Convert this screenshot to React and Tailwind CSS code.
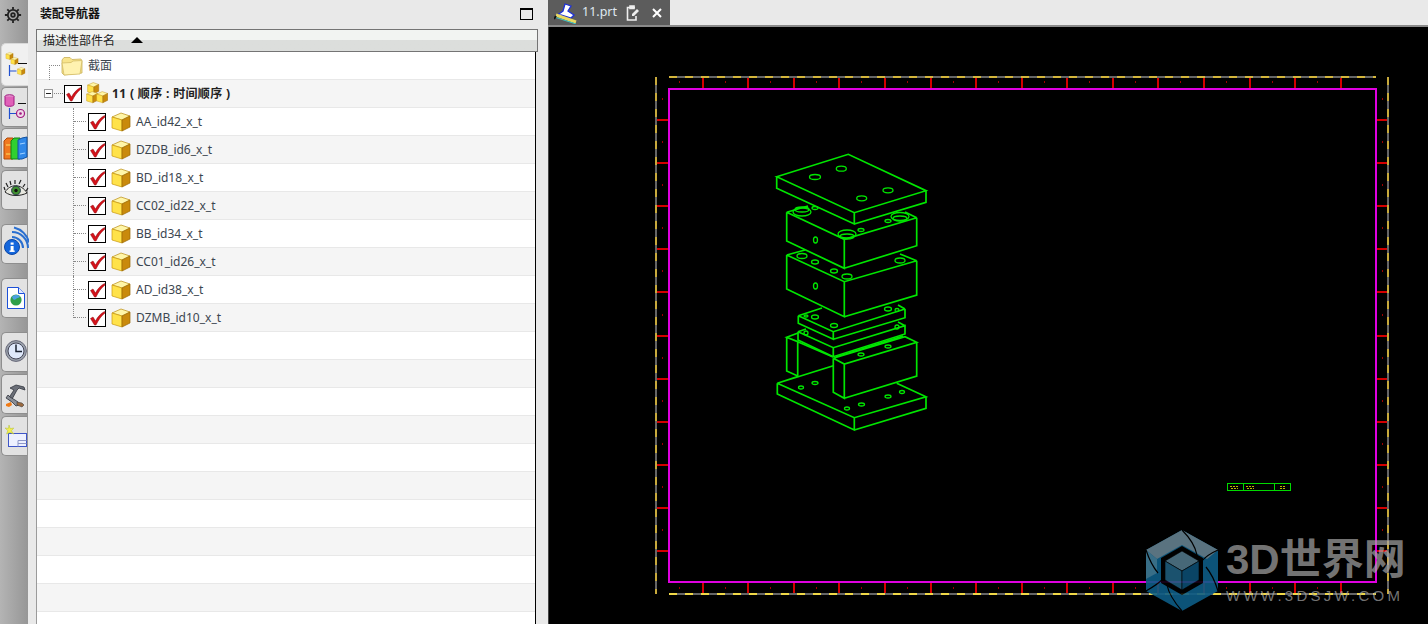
import React from 'react';

const cjk = "font-['Noto_Sans','Noto_Sans_CJK_SC',sans-serif]";

const parts = ['AA_id42_x_t', 'DZDB_id6_x_t', 'BD_id18_x_t', 'CC02_id22_x_t', 'BB_id34_x_t', 'CC01_id26_x_t', 'AD_id38_x_t', 'DZMB_id10_x_t'];
const emptyRows = Array.from({ length: 11 }, (_, i) => i);

function CheckBox() {
  return (
    <svg width="18" height="18" viewBox="0 0 18 18" className="shrink-0">
      <rect x="0.5" y="0.5" width="17" height="17" fill="#fff" stroke="#000" />
      <path d="M2.5 9.5 L5 8 L7.5 12 C9.5 8 12.5 4.5 16.5 2.5 L17 4 C13 7 10.5 11 8 16 L6.5 16 Z" fill="#d4121a" stroke="#8e0a10" strokeWidth="0.5" />
    </svg>
  );
}

function Cube({ x = 0, y = 0, s = 1 }) {
  return (
    <g transform={`translate(${x} ${y}) scale(${s})`}>
      <path d="M1 5 L10 1 L19 4 L11 8 Z" fill="#fff6a8" stroke="#b98a10" strokeWidth="0.7" />
      <path d="M1 5 L11 8 L11 19 L1 16 Z" fill="#ffe24a" stroke="#c8960f" strokeWidth="0.7" />
      <path d="M11 8 L19 4 L19 15 L11 19 Z" fill="#c98a0c" stroke="#9a6806" strokeWidth="0.7" />
    </g>
  );
}

function PartIcon() {
  return (
    <svg width="20" height="20" viewBox="0 0 20 20" className="shrink-0">
      <Cube />
    </svg>
  );
}

function AssemblyIcon() {
  return (
    <svg width="22" height="22" viewBox="0 0 22 22" className="shrink-0">
      <Cube x={1} y={0} s={0.62} />
      <Cube x={0} y={9} s={0.62} />
      <Cube x={10} y={9} s={0.62} />
    </svg>
  );
}

function FolderIcon() {
  return (
    <svg width="22" height="20" viewBox="0 0 22 20" className="shrink-0">
      <path d="M1 4 L3 1.5 L9 1.5 L11 3.5 L20 3 L21 5 L21 17 L3 19 L1 17 Z" fill="#f8e48c" stroke="#c8b05a" strokeWidth="0.8" />
      <path d="M1 7 L10 6.5 L12 5 L21 4.5 L19 18 L3 19 Z" fill="#fff2b0" stroke="#d4bc66" strokeWidth="0.8" />
    </svg>
  );
}

function Tree({ label, bold, className = '' }) {
  return <span className={`${cjk} text-[12px] leading-none whitespace-nowrap ${bold ? 'font-bold text-[#222]' : 'text-[#3c4650]'} ${className}`}>{label}</span>;
}

function Tab({ active, className, children }) {
  return (
    <div className={`relative ml-[1px] h-[40px] rounded-l-[5px] border-y border-l ${active ? 'w-[27px] bg-[#f0f0f0] border-[#d8d8d8]' : 'w-[26px] bg-[#e2e2e2] border-[#8e8e8e]'} ${className}`}>
      <svg width="28" height="44" viewBox="0 0 28 44" className="absolute -left-[1px] -top-[1px]">{children}</svg>
    </div>
  );
}

function LeftRail() {
  return (
    <div className="flex w-[28px] shrink-0 flex-col bg-gradient-to-r from-[#b4b4b4] to-[#969696]">
      <div className="flex h-[29px] items-center pl-[4px]">
        <svg width="18" height="18" viewBox="0 0 16 16" fill="none" stroke="#222" strokeWidth="1.6">
          <circle cx="8" cy="8" r="4.6" />
          <circle cx="8" cy="8" r="1.6" />
          <path d="M8 .8v2.4M8 12.8v2.4M.8 8h2.4M12.8 8h2.4M2.9 2.9l1.7 1.7M11.4 11.4l1.7 1.7M13.1 2.9l-1.7 1.7M4.6 11.4l-1.7 1.7" />
        </svg>
      </div>
      <Tab active className="mt-[14px] !h-[43px]">
        <path d="M17 20.5h9" stroke="#111" />
        <path d="M8.5 22v11M8.5 28h7" stroke="#2050d0" strokeWidth="1.2" fill="none" />
        <Cube x={4.5} y={9} s={0.4} />
        <Cube x={9.5} y={14} s={0.4} />
        <Cube x={16} y={24} s={0.42} />
      </Tab>
      <Tab className="mt-[1px]">
        <ellipse cx="8.5" cy="9.5" rx="4.5" ry="1.8" fill="#e4a0d0" stroke="#a01880" />
        <path d="M4 9.5v8c0 2.4 9 2.4 9 0v-8" fill="#e060b8" stroke="#a01880" />
        <path d="M17 16.5h8" stroke="#111" />
        <path d="M8.5 21v11M8.5 26.5h7" stroke="#2050d0" strokeWidth="1.2" fill="none" />
        <circle cx="19.5" cy="26.5" r="4" fill="#f0d8e8" stroke="#a01880" strokeWidth="1.2" />
        <circle cx="19.5" cy="26.5" r="1.3" fill="#a01880" />
      </Tab>
      <Tab className="mt-[1px]">
        <path d="M3 13l3-3h6v21H3z" fill="#f07820" stroke="#b04808" />
        <path d="M5 17h5M5 26h5" stroke="#ffe060" strokeWidth="1.2" />
        <path d="M10 13l3-3h6v21h-9z" fill="#30d030" stroke="#108010" />
        <path d="M17 12l4-2 5-1v20l-5 2h-4z" fill="#3088e8" stroke="#1050a0" />
        <path d="M19 16l5-1M19 26l5-1" stroke="#a0d0ff" strokeWidth="1.2" />
      </Tab>
      <Tab className="mt-[2px]">
        <path d="M4 22C9 14 20 13 26 23C20 26 10 27 4 22Z" fill="#e8e8e0" stroke="#222" />
        <circle cx="15" cy="20.5" r="4.4" fill="#3f8f2f" stroke="#234" />
        <circle cx="15" cy="20.5" r="1.7" fill="#111" />
        <path d="M4 20l-1-3M7 17l-2-4M10 15l-1-4M14 14v-4M18 14l2-4M22 17l2-3M25 21l2-3" stroke="#222" strokeWidth="1.2" />
      </Tab>
      <Tab className="mt-[14px]">
        <path d="M11 13a11 11 0 0 1 11 11" fill="none" stroke="#2a6fd0" strokeWidth="2" />
        <path d="M11 8a16 16 0 0 1 16 16" fill="none" stroke="#2a6fd0" strokeWidth="2" />
        <path d="M13 3.5a20 20 0 0 1 15 15" fill="none" stroke="#2a6fd0" strokeWidth="2" />
        <circle cx="11" cy="23" r="7.5" fill="#1466dc" stroke="#0c48a8" />
        <rect x="9.6" y="22" width="3" height="5.5" fill="#fff" />
        <rect x="9.6" y="18.5" width="3" height="2.2" fill="#fff" />
        <rect x="8.5" y="26.5" width="5.2" height="1.4" fill="#fff" />
      </Tab>
      <Tab className="mt-[14px]">
        <path d="M6.5 9.5h11l6 6v15h-17z" fill="#fff" stroke="#1c50d8" />
        <path d="M17.5 9.5v6h6" fill="#dfe8ff" stroke="#1c50d8" />
        <circle cx="15" cy="22" r="5.6" fill="#2f9f4a" />
        <path d="M11 19c2-2.5 6-2.5 8-.5-1 2-3 1-4 2.5s-3 1-4-2z" fill="#4aa0e0" />
      </Tab>
      <Tab className="mt-[14px]">
        <circle cx="15" cy="19" r="10.4" fill="#9aa2ac" stroke="#667" />
        <circle cx="15" cy="19" r="8" fill="#dfe9fb" stroke="#445" />
        <path d="M15 12.5V19.5H21" fill="none" stroke="#1a2230" strokeWidth="1.5" />
      </Tab>
      <Tab className="mt-[2px]">
        <path d="M9 14l6-3 8 2 1 3-6-2-2 2-6 11-3-2 6-9z" fill="#6b6f78" stroke="#30343c" strokeWidth="0.8" />
        <path d="M7 21l2 2 5 3 3 2 1 3-3 1-4-4-3-2-3-2z" fill="#8a8e96" stroke="#30343c" strokeWidth="0.8" />
        <path d="M5 30l5-2 1 3-3 2-3-1z" fill="#f07a14" />
        <path d="M16 28l5 1 2 2-2 2-5-2z" fill="#9a6a40" stroke="#444" strokeWidth="0.6" />
      </Tab>
      <Tab className="mt-[2px]">
        <rect x="7.5" y="17.5" width="18" height="13" fill="#eef1ff" stroke="#3f56c8" />
        <path d="M17 24.5h8.5M17 24.5v6M17 27.5h8.5" stroke="#8e98c8" fill="none" />
        <path d="M8 9l1.2 3.6 3.6-.6-2.4 2.8L12.8 18 9 16.4 5.6 18l1.2-3.4L4 12l3.4.4z" fill="#f4ee50" stroke="#b0c030" strokeWidth="0.5" />
      </Tab>
    </div>
  );
}

function Navigator() {
  return (
    <div className="flex w-[520px] shrink-0 flex-col bg-[#e9e9e9]">
      <div className="flex h-[29px] shrink-0 items-center justify-between pb-[1px] pl-[12px] pr-[15px]">
        <span className={`${cjk} text-[12px] font-bold text-[#111]`}>装配导航器</span>
        <div className="h-[12px] w-[13px] border border-t-2 border-black" />
      </div>
      <div className="ml-[8px] flex w-[502px] flex-1 flex-col overflow-hidden">
        <div className="flex h-[23px] shrink-0 items-center border border-[#747474] bg-gradient-to-b from-[#f2f4f2] from-50% to-[#dcdedc] to-50% pl-[6px]">
          <span className={`${cjk} text-[12px] text-[#222]`}>描述性部件名</span>
          <span className="ml-[16px] mb-[2px] h-0 w-0 border-x-[6px] border-b-[6px] border-x-transparent border-b-black" />
        </div>
        <div className="relative mr-[2px] flex-1 border-x border-r-black border-l-[#9a9a9a] bg-white">
          <div className="relative flex h-[28px] items-center gap-[5px] border-b border-[#e8e8e8] pl-[24px]">
            <FolderIcon />
            <Tree label="截面" />
            <div className="absolute left-[12px] top-[13px] h-[27px] w-[11px] border-l border-t border-dotted border-[#888]" />
          </div>
          <div className="relative flex h-[28px] items-center border-b border-[#e8e8e8] bg-[#f5f5f5] pl-[27px]">
            <CheckBox />
            <div className="ml-[4px] mb-[1px]"><AssemblyIcon /></div>
            <div className="ml-[4px]"><Tree label="11 ( 顺序 : 时间顺序 )" bold className="block tracking-[0.35px]" /></div>
            <div className="absolute left-[7px] top-[9px] flex h-[9px] w-[9px] items-center justify-center border border-[#999] bg-white">
              <div className="h-px w-[5px] bg-[#222]" />
            </div>
            <div className="absolute left-[17px] top-[13px] w-[9px] border-t border-dotted border-[#888]" />
          </div>
          {parts.map((name, i) => (
            <div key={name} className={`relative flex h-[28px] items-center border-b border-[#e8e8e8] pl-[51px] ${i % 2 ? 'bg-[#f5f5f5]' : 'bg-white'}`}>
              <CheckBox />
              <div className="ml-[5px]"><PartIcon /></div>
              <div className="ml-[5px]"><Tree label={name} className="block" /></div>
              <div className={`absolute left-[36px] top-0 border-l border-dotted border-[#888] ${i === parts.length - 1 ? 'h-[14px]' : 'h-[28px]'}`} />
              <div className="absolute left-[37px] top-[13px] w-[12px] border-t border-dotted border-[#888]" />
            </div>
          ))}
          {emptyRows.map((r) => (
            <div key={r} className={`h-[28px] border-b border-[#e8e8e8] ${r % 2 ? 'bg-[#f5f5f5]' : 'bg-white'}`} />
          ))}
        </div>
      </div>
    </div>
  );
}

const G = '#00e600';
const faces = [
  // top plate
  'M776.7 176.7 848.3 154.3 926 190.7 854.3 212.7Z M776.7 176.7V188.3L854.3 224V212.7 M854.3 224 926 202.3V190.7',
  // block 1
  'M786.7 212.3 844.3 239.3 916.7 217.7 M786.7 212.3V241L844.3 268.3V239.3 M844.3 268.3 916.7 245.7V217.7 M786.7 212.3 808 206 M905 212 916.7 217.7',
  // block 2
  'M786.7 255 844.3 281.7 916.7 260.7 M786.7 255 805 250 M786.7 255V289L844.3 316.7V281.7 M844.3 316.7 916.7 295V260.7 M900 254 916.7 260.7',
  // thin plates
  'M798.3 315.7 833.3 331.7 905 309 M798.3 315.7V323.3L833.3 339.3V331.7 M833.3 339.3 905 317.7V309 M798.3 315.7 822 308 M898 305 905 309',
  'M798 331.7 833.3 347.7 905 325.7V334L833.3 356.7V347.7 M798 331.7V340L833.3 356.7 M798 331.7 806 329 M898 322 905 325.7',
  // left block
  'M786.7 337.3V371L797.7 376V341.7L786.7 337.3 798 333 M797.7 341.7 833 357',
  // right block
  'M833.3 358.3 844.3 364 916.7 342.3 905 336.7 833.3 358.3 M833.3 358.3V392.3L844.3 398.3V364 M844.3 398.3 916.7 376V342.3 M836 357 903 336',
  // base plate
  'M777.3 383.3 833.3 365.7 M777.3 383.3 854.3 417.7 926 396.7 896.7 383.3 M777.3 383.3V394L854.3 430V417.7 M854.3 430 926 408.3V396.7 M797.7 376.5 777.3 383.3',
];
const holes = [
  [841.3, 168.7, 5, 2.5], [815, 177, 5.5, 2.5], [888, 190.3, 5, 2.5], [861.7, 198.3, 5, 2.5],
  [802, 212, 9, 4], [802, 209.5, 7, 2.5], [815, 208, 3, 1.5], [900, 216.5, 9, 4], [900, 218.5, 7, 2.5], [888, 221, 3, 1.5],
  [847, 234, 9, 4], [847, 236.5, 7, 2.5], [861, 230, 3, 1.5], [815.5, 240, 2, 3],
  [802, 256, 5, 2.5], [815, 262, 3.5, 2], [834, 271, 3.5, 2], [847, 276.5, 5, 2.5], [900, 260.5, 5, 2.5], [815.5, 286, 2, 3],
  [888, 309, 3.5, 2], [815, 317, 3.5, 2], [806, 316, 2, 1], [834, 325.5, 3.5, 2], [897, 310, 2, 1.5], [806, 333, 2, 2], [897, 327, 2, 2],
  [888, 346.5, 3, 1.5], [861, 354.5, 3, 1.5],
  [801, 387.5, 2.5, 1.5], [815, 383, 3, 1.5], [888, 396.5, 3, 1.5], [902, 392, 2.5, 1.5], [847, 408.5, 2.5, 1.5], [861.5, 404.5, 3, 1.5],
];
const topTicks = Array.from({ length: 15 }, (_, i) => 702.7 + i * 45.57);
const sideTicks = Array.from({ length: 11 }, (_, i) => 120 + i * 43.1);

function Drawing() {
  return (
    <svg viewBox="548 27 880 597" width="880" height="597" className="block" shapeRendering="crispEdges">
      {topTicks.map((x) => (
        <g key={x} stroke="#d40000">
          <path d={`M${x} 77V89M${x} 582V594`} strokeWidth="2" />
          <path d={`M${x - 23} 81V83M${x - 23} 587V589`} stroke="#a00000" />
        </g>
      ))}
      {sideTicks.map((y) => (
        <g key={y} stroke="#d40000">
          <path d={`M657 ${y}H669M1376 ${y}H1388`} strokeWidth="2" />
          <path d={`M662 ${y - 22}v2M1382 ${y - 22}v2`} stroke="#a00000" />
        </g>
      ))}
      <path d="M669 77H1376M669 594H1376M656 77V594M1388 77V594" stroke="#666" strokeWidth="2" fill="none" />
      <path d="M669 77H1376" stroke="#d4b63c" strokeWidth="2" strokeDasharray="8 8" fill="none" />
      <path d="M669 594H1376" stroke="#f0d848" strokeWidth="2" strokeDasharray="8 8" fill="none" />
      <path d="M656 77V594M1388 77V594" stroke="#c8aa3c" strokeWidth="2" strokeDasharray="8 8" fill="none" />
      <rect x="668.5" y="89" width="707.5" height="493" fill="none" stroke="#e000e0" strokeWidth="2" />
      {faces.map((d) => (
        <path key={d} d={d} fill="none" stroke={G} strokeWidth="1.7" shapeRendering="auto" />
      ))}
      {holes.map(([cx, cy, rx, ry]) => (
        <ellipse key={`${cx}-${cy}`} cx={cx} cy={cy} rx={rx} ry={ry} fill="none" stroke={G} strokeWidth="1.3" shapeRendering="auto" />
      ))}
      <rect x="1227.5" y="483.5" width="63" height="7" fill="none" stroke="#00d800" strokeWidth="1.5" />
      <path d="M1243.5 484V490M1274.5 484V490" stroke="#00d800" />
      <path d="M1230 486h8M1231 488h7M1246 486h8M1247 488h7M1280 486h6M1280 488h6" stroke="#b8b800" strokeDasharray="2 1" />
    </svg>
  );
}

function Watermark() {
  return (
    <div className="pointer-events-none absolute left-[596px] top-[502px] flex items-start">
      <svg width="74" height="84" viewBox="0 0 74 84" className="opacity-90">
        <path d="M37 1 73 21V62L37 82 1 62V21Z" fill="#0e5d86" />
        <path d="M37 1 73 21 62 30 37 16 12 30 1 21Z" fill="#64808e" />
        <path d="M1 21 12 30V44L1 50Z" fill="#3f7a96" />
        <path d="M37 1C44 8 50 16 52 26M73 21C66 24 60 28 56 33M73 62C70 52 66 44 61 38M37 82C30 74 24 66 22 56M1 62C8 58 14 54 18 50M1 21C4 30 8 38 13 44" fill="none" stroke="#000" strokeWidth="1.2" />
        <path d="M37 17 58 29V54L37 66 16 54V29Z" fill="#000" />
        <path d="M37 22 54 32 37 42 20 32Z" fill="#4f7486" stroke="#000" strokeWidth="0.6" />
        <path d="M20 32 37 42V61L20 51Z" fill="#1f5b7a" stroke="#000" strokeWidth="0.6" />
        <path d="M54 32 37 42V61L54 51Z" fill="#0c4c70" stroke="#000" strokeWidth="0.6" />
      </svg>
      <div className="ml-[7px] flex flex-col">
        <span className="font-['Liberation_Sans','Noto_Sans_CJK_SC',sans-serif] mt-[6px] text-[42px] leading-[50px] font-bold whitespace-nowrap text-[#a8a8a8]/70">3D世界网</span>
        <span className="font-['Liberation_Sans',sans-serif] mt-[3px] text-[15px] leading-[15px] tracking-[3.25px] whitespace-nowrap text-[#a8a8a8]/70">WWW.3DSJW.COM</span>
      </div>
    </div>
  );
}

function Viewport() {
  return (
    <div className="flex min-w-0 flex-1 flex-col bg-[#e9e9e9]">
      <div className="flex h-[27px] shrink-0 items-stretch border-b-2 border-[#8a8a8a]">
        <div className="flex w-[122px] items-center bg-[#5c5c5c] pl-[6px]">
          <svg width="24" height="22" viewBox="0 0 24 22">
            <path d="M2 14 9 9 11 2 17 4 14 9 20 13 17 16 7 13Z" fill="#fff" stroke="#1c30d8" strokeWidth="1.3" />
            <path d="M2 13 22 20" stroke="#e8d860" strokeWidth="3" />
            <path d="M2 15.5 22 22" stroke="#40c8c8" strokeWidth="1" />
            <path d="M2 14 0 17" stroke="#111" strokeWidth="2" />
          </svg>
          <span className="ml-[4px] font-['Noto_Sans',sans-serif] text-[12.5px] text-[#dfe8f0]">11.prt</span>
          <svg width="14" height="16" viewBox="0 0 14 16" className="ml-[9px]" fill="none" stroke="#eee" strokeWidth="1.6">
            <path d="M9 2.5H1.5V15H10V11" />
            <path d="M4 1h4v2.5H4z" fill="#eee" />
            <path d="M6 9 11 4l2 2-5 5H6z" fill="#eee" stroke="none" />
          </svg>
          <svg width="10" height="10" viewBox="0 0 10 10" className="ml-[12px]" stroke="#fff" strokeWidth="2">
            <path d="M1 1 9 9M9 1 1 9" />
          </svg>
        </div>
      </div>
      <div className="relative flex-1 overflow-hidden border-l border-[#444] bg-black">
        <div className="-ml-[1px]"><Drawing /></div>
        <Watermark />
      </div>
    </div>
  );
}

export default function App() {
  return (
    <div className="flex h-[624px] w-[1428px] overflow-hidden bg-[#e9e9e9]">
      <LeftRail />
      <Navigator />
      <Viewport />
    </div>
  );
}
